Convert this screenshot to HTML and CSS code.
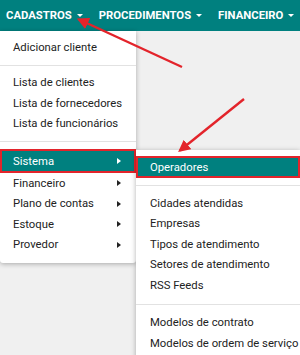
FILE: index.html
```html
<!DOCTYPE html>
<html lang="pt-BR">
<head>
    <meta charset="UTF-8">
    <meta name="viewport" content="width=device-width, initial-scale=1.0">
    <title>Cadastros</title>
    <link rel="stylesheet" href="styles.css">
</head>
<body>
    <nav class="navbar">
        <div class="nav-item">
            <span class="nav-link">Cadastros<span class="caret"></span></span>
            <ul class="menu menu-main">
                <li class="menu-item">Adicionar cliente</li>
                <li class="divider"></li>
                <li class="menu-item">Lista de clientes</li>
                <li class="menu-item">Lista de fornecedores</li>
                <li class="menu-item">Lista de funcionários</li>
                <li class="divider"></li>
                <li class="menu-item sub active marked">
                    Sistema<span class="sub-arrow"></span>
                    <ul class="menu menu-sub">
                        <li class="menu-item active marked">Operadores</li>
                        <li class="divider"></li>
                        <li class="menu-item">Cidades atendidas</li>
                        <li class="menu-item">Empresas</li>
                        <li class="menu-item">Tipos de atendimento</li>
                        <li class="menu-item">Setores de atendimento</li>
                        <li class="menu-item">RSS Feeds</li>
                        <li class="divider wide"></li>
                        <li class="menu-item">Modelos de contrato</li>
                        <li class="menu-item">Modelos de ordem de serviço</li>
                    </ul>
                </li>
                <li class="menu-item sub">Financeiro<span class="sub-arrow"></span></li>
                <li class="menu-item sub">Plano de contas<span class="sub-arrow"></span></li>
                <li class="menu-item sub">Estoque<span class="sub-arrow"></span></li>
                <li class="menu-item sub">Provedor<span class="sub-arrow"></span></li>
            </ul>
        </div>
        <div class="nav-item">
            <span class="nav-link">Procedimentos<span class="caret"></span></span>
        </div>
        <div class="nav-item">
            <span class="nav-link">Financeiro<span class="caret"></span></span>
        </div>
    </nav>

    <!-- annotation arrows drawn over the screenshot -->
    <svg class="annotations" width="300" height="355" viewBox="0 0 300 355">
        <defs>
            <marker id="head" markerWidth="5" markerHeight="5" refX="4" refY="2.5" orient="auto">
                <path d="M0,0 L5,2.5 L0,5 Z" fill="#e3242b"/>
            </marker>
        </defs>
        <line x1="182" y1="67" x2="79" y2="19.5" stroke="#e3242b" stroke-width="2.4" marker-end="url(#head)"/>
        <line x1="244" y1="99" x2="180" y2="150.5" stroke="#e3242b" stroke-width="2.4" marker-end="url(#head)"/>
    </svg>
</body>
</html>
```

FILE: styles.css
```css
body {
    margin: 0;
    width: 300px;
    height: 355px;
    overflow: hidden;
    position: relative;
    background-color: #f0f0f0;
    font-family: Roboto, "Liberation Sans", Arial, sans-serif;
    color: #222;
}

.navbar {
    display: flex;
    height: 31px;
    padding-left: 6px;
    background-color: #00807f;
}

.nav-item {
    position: relative;
}

.nav-link {
    display: flex;
    align-items: center;
    height: 31px;
    padding-right: 16px;
    font-size: 11.3px;
    font-weight: bold;
    text-transform: uppercase;
    color: #fff;
}

.caret {
    width: 0;
    height: 0;
    margin-left: 5px;
    border-left: 3px solid transparent;
    border-right: 3px solid transparent;
    border-top: 3px solid #fff;
}

.menu {
    list-style: none;
    margin: 0;
    position: absolute;
    background-color: #fff;
    box-shadow: 0 1px 5px rgba(0, 0, 0, 0.3);
}

.menu-main {
    top: 31px;
    left: -6px;
    width: 136px;
    padding: 6px 0 8px;
    border-radius: 0 0 3px 3px;
}

.menu-sub {
    top: 1px;
    left: 136px;
    width: 164px;
    padding: 6px 0 8px;
}

.menu-item {
    position: relative;
    display: flex;
    align-items: center;
    height: 20.5px;
    padding: 0 13px;
    font-size: 11.3px;
    white-space: nowrap;
}

.menu-sub > .menu-item {
    padding-left: 14px;
}

.menu-item.active {
    height: 22px;
    background-color: #00807f;
    color: #fff;
}

.menu-item.marked {
    box-shadow: inset 0 0 0 2px #e3242b;
}

.menu-main > .menu-item.sub.active {
    height: 24px;
}

.menu-item.active .menu-item {
    color: #222;
}

.menu-item.active .menu-item.active {
    color: #fff;
}

.sub-arrow {
    position: absolute;
    left: 117px;
    top: 50%;
    width: 0;
    height: 0;
    margin-top: -3px;
    border-top: 3px solid transparent;
    border-bottom: 3px solid transparent;
    border-left: 4px solid #222;
}

.active > .sub-arrow {
    border-left-color: #fff;
}

.divider {
    height: 1px;
    margin: 7px 0;
    background-color: #e2e2e2;
}

.divider.wide {
    margin: 8px 0;
}

.annotations {
    position: absolute;
    top: 0;
    left: 0;
    pointer-events: none;
}
```
